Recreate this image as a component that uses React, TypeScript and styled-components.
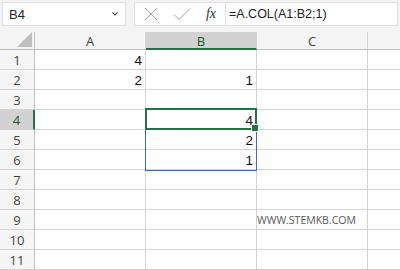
import React from "react";
import styled, { createGlobalStyle } from "styled-components";

const Global = createGlobalStyle`
  html, body { margin: 0; padding: 0; background: #ffffff; }
  body { font-family: "Liberation Sans", Arial, sans-serif; width: 400px; height: 270px; overflow: hidden; }
`;

const Page = styled.div`
  width: 400px;
  height: 270px;
  overflow: hidden;
  display: flex;
  flex-direction: column;
  background: #ffffff;
`;

const TopBar = styled.div`
  height: 34px;
  box-sizing: border-box;
  background: #f3f3f3;
  display: flex;
  align-items: flex-start;
  padding: 2px 2px 0 2px;
  gap: 8px;
`;

const NameBox = styled.div`
  width: 124px;
  height: 24px;
  box-sizing: border-box;
  background: #fff;
  border: 1px solid #e1e1e1;
  display: flex;
  align-items: center;
  justify-content: space-between;
  padding: 0 6px 0 6px;
  font-size: 13px;
  color: #222;
`;

const FormulaBox = styled.div`
  flex: 1;
  height: 24px;
  box-sizing: border-box;
  background: #fff;
  border: 1px solid #e1e1e1;
  display: flex;
  align-items: center;
`;

const IconSlot = styled.div`
  width: 31px;
  height: 22px;
  display: flex;
  align-items: center;
  justify-content: center;
`;

const Fx = styled.div`
  width: 28px;
  font-family: "Liberation Serif", "Times New Roman", serif;
  font-style: italic;
  font-size: 14px;
  color: #333;
  text-align: center;
`;

const FormulaInput = styled.div`
  flex: 1;
  height: 22px;
  box-sizing: border-box;
  border-left: 1px solid #e1e1e1;
  display: flex;
  align-items: center;
  padding-left: 3px;
  font-size: 12.5px;
  color: #222;
`;

const Sheet = styled.div`
  display: grid;
  grid-template-columns: 35px 111px 111px 111px 1fr;
  grid-auto-rows: 20px;
  grid-template-rows: 18px;
`;

const Corner = styled.div`
  background: #f5f5f5;
  border-right: 1px solid #bfbfbf;
  border-bottom: 1px solid #bfbfbf;
  box-sizing: border-box;
  position: relative;
`;

const Triangle = styled.div`
  position: absolute;
  right: 2px;
  bottom: 2px;
  width: 0;
  height: 0;
  border-left: 15px solid transparent;
  border-bottom: 15px solid #bfbfbf;
`;

const ColHead = styled.div<{ $active?: boolean; $last?: boolean }>`
  box-sizing: border-box;
  background: ${(p) => (p.$active ? "#d2d2d2" : "#f5f5f5")};
  border-right: ${(p) => (p.$last ? "none" : "1px solid #d4d4d4")};
  border-bottom: ${(p) => (p.$active ? "2px solid #217346" : "1px solid #bfbfbf")};
  display: flex;
  align-items: center;
  justify-content: center;
  font-family: "Open Sans", "Noto Sans", sans-serif;
  font-size: 13px;
  color: ${(p) => (p.$active ? "#185c37" : "#444")};
  padding-top: 1px;
`;

const RowHead = styled.div<{ $active?: boolean }>`
  box-sizing: border-box;
  background: ${(p) => (p.$active ? "#d2d2d2" : "#f5f5f5")};
  border-right: ${(p) => (p.$active ? "2px solid #217346" : "1px solid #bfbfbf")};
  border-bottom: 1px solid #d4d4d4;
  display: flex;
  align-items: center;
  justify-content: center;
  font-family: "Open Sans", "Noto Sans", sans-serif;
  font-size: 13px;
  color: ${(p) => (p.$active ? "#185c37" : "#444")};
  padding-top: 1px;
`;

const Cell = styled.div<{ $noRight?: boolean }>`
  box-sizing: border-box;
  position: relative;
  border-right: ${(p) => (p.$noRight ? "none" : "1px solid #d4d4d4")};
  border-bottom: 1px solid #d4d4d4;
  display: flex;
  align-items: center;
  justify-content: flex-end;
  padding: 1px 3px 0 0;
  font-size: 13.5px;
  color: #111;
  white-space: nowrap;
`;

const Watermark = styled.span`
  position: absolute;
  left: 0;
  top: 3px;
  font-family: "Open Sans", "Noto Sans", sans-serif;
  font-size: 10.5px;
  color: #595959;
  letter-spacing: 0;
`;

const ActiveBorder = styled.div`
  position: absolute;
  left: -1px;
  top: -2px;
  width: 112px;
  height: 22px;
  box-sizing: border-box;
  border: 2px solid #217346;
  pointer-events: none;
  z-index: 3;
`;

const SpillBorder = styled.div`
  position: absolute;
  left: -1px;
  top: -1px;
  width: 112px;
  height: 62px;
  box-sizing: border-box;
  border: 1px solid #3a68c8;
  pointer-events: none;
  z-index: 2;
`;

const Handle = styled.div`
  position: absolute;
  right: -4px;
  bottom: -4px;
  width: 6px;
  height: 6px;
  background: #217346;
  border: 1px solid #fff;
  z-index: 4;
`;

const CellValue = styled.span`
  position: relative;
  z-index: 5;
`;

const cols = ["A", "B", "C", ""];

type Row = { n: number; vals: string[] };

const rows: Row[] = [
  { n: 1, vals: ["4", "", "", ""] },
  { n: 2, vals: ["2", "1", "", ""] },
  { n: 3, vals: ["", "", "", ""] },
  { n: 4, vals: ["", "4", "", ""] },
  { n: 5, vals: ["", "2", "", ""] },
  { n: 6, vals: ["", "1", "", ""] },
  { n: 7, vals: ["", "", "", ""] },
  { n: 8, vals: ["", "", "", ""] },
  { n: 9, vals: ["", "", "", ""] },
  { n: 10, vals: ["", "", "", ""] },
  { n: 11, vals: ["", "", "", ""] },
];

const Chevron = () => (
  <svg width="8" height="6" viewBox="0 0 8 6">
    <path d="M1.5 1.5 L4 4 L6.5 1.5" stroke="#444" strokeWidth="1.1" fill="none" />
  </svg>
);

const Cross = () => (
  <svg width="14" height="14" viewBox="0 0 14 14">
    <path d="M1 1 L13 13 M13 1 L1 13" stroke="#a6a6a6" strokeWidth="1" fill="none" />
  </svg>
);

const Check = () => (
  <svg width="18" height="14" viewBox="0 0 18 14">
    <path d="M1 7.5 L6 12.5 L17 1.5" stroke="#a6a6a6" strokeWidth="1" fill="none" />
  </svg>
);

export default function App() {
  return (
    <Page>
      <Global />
      <TopBar>
        <NameBox>
          <span>B4</span>
          <Chevron />
        </NameBox>
        <FormulaBox>
          <IconSlot>
            <Cross />
          </IconSlot>
          <IconSlot>
            <Check />
          </IconSlot>
          <Fx>fx</Fx>
          <FormulaInput>=A.COL(A1:B2;1)</FormulaInput>
        </FormulaBox>
      </TopBar>
      <Sheet>
        <Corner>
          <Triangle />
        </Corner>
        {cols.map((c, i) => (
          <ColHead key={i} $active={c === "B"} $last={i === cols.length - 1}>
            {c}
          </ColHead>
        ))}
        {rows.map((r) => (
          <React.Fragment key={r.n}>
            <RowHead $active={r.n === 4}>{r.n}</RowHead>
            {r.vals.map((v, ci) => (
              <Cell key={ci} $noRight={ci === 3}>
                {r.n === 4 && ci === 1 && (
                  <>
                    <SpillBorder />
                    <ActiveBorder>
                      <Handle />
                    </ActiveBorder>
                  </>
                )}
                {r.n === 9 && ci === 2 && <Watermark>WWW.STEMKB.COM</Watermark>}
                <CellValue>{v}</CellValue>
              </Cell>
            ))}
          </React.Fragment>
        ))}
      </Sheet>
    </Page>
  );
}
